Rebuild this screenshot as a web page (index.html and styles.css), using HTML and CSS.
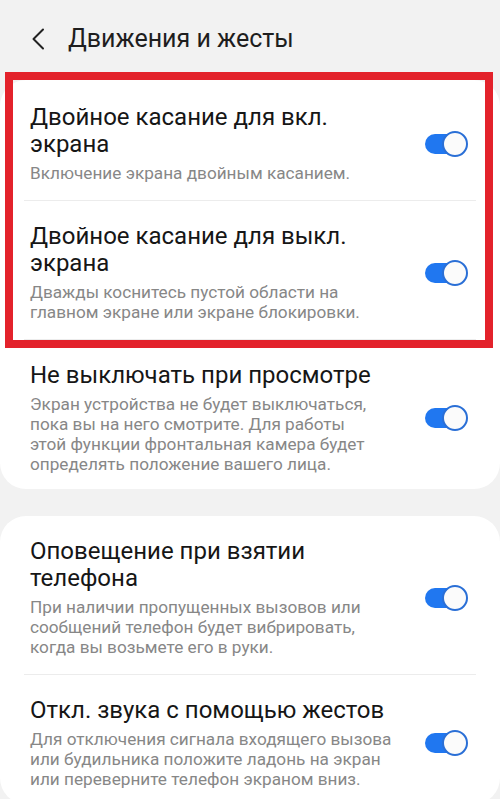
FILE: index.html
```html
<!DOCTYPE html>
<html lang="ru">
<head>
    <meta charset="UTF-8">
    <meta name="viewport" content="width=device-width, initial-scale=1.0">
    <title>Движения и жесты</title>
    <link rel="stylesheet" href="styles.css">
</head>
<body>
    <header class="topbar">
        <svg class="back" width="14" height="22" viewBox="0 0 14 22">
            <path d="M12 1.5 L2.5 11 L12 20.5" fill="none" stroke="#222" stroke-width="2" stroke-linecap="round" stroke-linejoin="round"/>
        </svg>
        <h1>Движения и жесты</h1>
    </header>

    <section class="card first">
        <div class="mark"></div>

        <div class="item">
            <div class="text">
                <div class="title">Двойное касание для вкл. экрана</div>
                <div class="sub">Включение экрана двойным касанием.</div>
            </div>
            <span class="switch on"></span>
        </div>

        <div class="item">
            <div class="text">
                <div class="title">Двойное касание для выкл. экрана</div>
                <div class="sub">Дважды коснитесь пустой области на главном экране или экране блокировки.</div>
            </div>
            <span class="switch on"></span>
        </div>

        <div class="item">
            <div class="text">
                <div class="title">Не выключать при просмотре</div>
                <div class="sub narrow">Экран устройства не будет выключаться, пока вы на него смотрите. Для работы этой функции фронтальная камера будет определять положение вашего лица.</div>
            </div>
            <span class="switch on"></span>
        </div>
    </section>

    <section class="card">
        <div class="item">
            <div class="text">
                <div class="title">Оповещение при взятии телефона</div>
                <div class="sub">При наличии пропущенных вызовов или сообщений телефон будет вибрировать, когда вы возьмете его в руки.</div>
            </div>
            <span class="switch on"></span>
        </div>

        <div class="item">
            <div class="text">
                <div class="title">Откл. звука с помощью жестов</div>
                <div class="sub">Для отключения сигнала входящего вызова или будильника положите ладонь на экран или переверните телефон экраном вниз.</div>
            </div>
            <span class="switch on"></span>
        </div>
    </section>
</body>
</html>
```

FILE: styles.css
```css
body {
    margin: 0;
    background: #f2f2f2;
    font-family: Roboto, "Noto Sans", sans-serif;
    color: #161616;
    overflow: hidden;
}
.topbar {
    height: 80px;
    display: flex;
    align-items: flex-start;
    padding: 26px 0 0 31px;
    box-sizing: border-box;
}
.back {
    margin-top: 2px;
}
.topbar h1 {
    margin: 0 0 0 23px;
    font-size: 25px;
    font-weight: 400;
    line-height: 26px;
    color: #1e1e1e;
}
.card {
    position: relative;
    background: #fff;
    border-radius: 26px;
    margin-bottom: 27px;
}
.card.first {
    padding-top: 2px;
}
/* red annotation frame over the first two rows */
.mark {
    position: absolute;
    top: -8px;
    left: 5px;
    right: 7px;
    height: 276px;
    border: 8px solid #e3222b;
    box-sizing: border-box;
    pointer-events: none;
}
.item {
    display: flex;
    align-items: center;
    margin: 0 24px;
    padding: 22px 0 17px 6px;
    border-top: 1px solid #ececec;
}
.card > .item:first-child,
.mark + .item {
    border-top: none;
}
.item:last-child {
    padding-bottom: 15px;
}
.text {
    flex: 1;
    padding-right: 25px;
}
.title {
    font-size: 24px;
    line-height: 27px;
}
.sub {
    margin-top: 5px;
    font-size: 17.2px;
    line-height: 20px;
    color: #878787;
}
.sub.narrow {
    max-width: 345px;
}
.switch {
    position: relative;
    width: 42px;
    height: 20px;
    border-radius: 10px;
    background: #2077f0;
    flex-shrink: 0;
    margin-right: 9px;
}
.switch.on::after {
    content: "";
    position: absolute;
    right: -1px;
    top: -3px;
    width: 22px;
    height: 22px;
    border-radius: 50%;
    background: #fbfbfb;
    border: 2px solid #2a6fd6;
}
```
